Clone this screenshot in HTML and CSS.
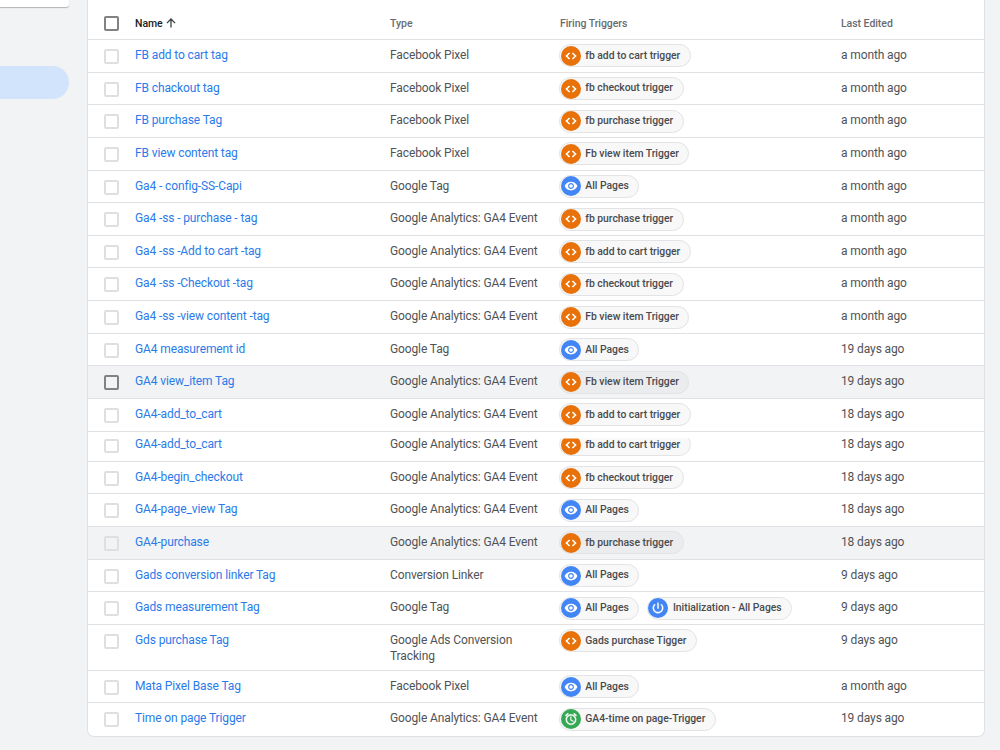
FILE: index.html
```html
<!DOCTYPE html>
<html lang="en">
<head>
    <meta charset="UTF-8">
    <meta name="viewport" content="width=device-width, initial-scale=1.0">
    <title>Tags</title>
    <link rel="stylesheet" href="styles.css">
</head>
<body>
    <!-- Icon sprites -->
    <svg class="sprites" aria-hidden="true">
        <symbol id="code" viewBox="0 0 24 24"><path d="M9.6 6.8 4.2 12l5.4 5.2M14.4 6.8l5.4 5.2-5.4 5.2" fill="none" stroke="#fff" stroke-width="2.7"/></symbol>
        <symbol id="eye" viewBox="0 0 24 24"><path fill="#fff" d="M12 4.5C7 4.5 2.73 7.61 1 12c1.73 4.39 6 7.5 11 7.5s9.27-3.11 11-7.5c-1.73-4.39-6-7.5-11-7.5zM12 17c-2.76 0-5-2.24-5-5s2.24-5 5-5 5 2.24 5 5-2.24 5-5 5zm0-8c-1.66 0-3 1.34-3 3s1.34 3 3 3 3-1.34 3-3-1.34-3-3-3z"/></symbol>
        <symbol id="power" viewBox="0 0 24 24"><path fill="#fff" d="M13 3h-2v10h2V3zm4.83 2.17-1.42 1.42C17.99 7.86 19 9.81 19 12c0 3.87-3.13 7-7 7s-7-3.13-7-7c0-2.19 1.01-4.14 2.58-5.42L6.17 5.17C4.23 6.82 3 9.26 3 12c0 4.97 4.03 9 9 9s9-4.03 9-9c0-2.74-1.23-5.18-3.17-6.83z" stroke="#fff" stroke-width=".6"/></symbol>
        <symbol id="alarm" viewBox="0 0 24 24"><path fill="#fff" d="m22 5.72-4.6-3.86-1.29 1.53 4.6 3.86L22 5.72zM7.88 3.39 6.6 1.86 2 5.71l1.29 1.53 4.59-3.85zM12.5 8H11v6l4.75 2.85.75-1.23-4-2.37V8zM12 4c-4.97 0-9 4.03-9 9s4.02 9 9 9a9 9 0 0 0 0-18zm0 16c-3.87 0-7-3.13-7-7s3.13-7 7-7 7 3.13 7 7-3.13 7-7 7z" stroke="#fff" stroke-width=".5"/></symbol>
    </svg>

    <div class="layout">
        <div class="sidebar">
            <div class="search-box"></div>
            <div class="nav-active"></div>
        </div>

        <div class="card">
            <div class="row head">
                <span class="check dark"></span>
                <div class="name">Name <svg class="arrow" viewBox="0 0 10 10"><path d="M5 9.6V1.2M.9 5.1 5 1l4.1 4.1"/></svg></div>
                <div>Type</div>
                <div>Firing Triggers</div>
                <div>Last Edited</div>
            </div>
            <div class="row">
                <span class="check"></span>
                <a class="name">FB add to cart tag</a>
                <div>Facebook Pixel</div>
                <div class="chips"><span class="chip"><i class="dot"><svg><use href="#code"/></svg></i>fb add to cart trigger</span></div>
                <div>a month ago</div>
            </div>
            <div class="row">
                <span class="check"></span>
                <a class="name">FB chackout tag</a>
                <div>Facebook Pixel</div>
                <div class="chips"><span class="chip"><i class="dot"><svg><use href="#code"/></svg></i>fb checkout trigger</span></div>
                <div>a month ago</div>
            </div>
            <div class="row">
                <span class="check"></span>
                <a class="name">FB purchase Tag</a>
                <div>Facebook Pixel</div>
                <div class="chips"><span class="chip"><i class="dot"><svg><use href="#code"/></svg></i>fb purchase trigger</span></div>
                <div>a month ago</div>
            </div>
            <div class="row">
                <span class="check"></span>
                <a class="name">FB view content tag</a>
                <div>Facebook Pixel</div>
                <div class="chips"><span class="chip"><i class="dot"><svg><use href="#code"/></svg></i>Fb view item Trigger</span></div>
                <div>a month ago</div>
            </div>
            <div class="row">
                <span class="check"></span>
                <a class="name">Ga4 - config-SS-Capi</a>
                <div>Google Tag</div>
                <div class="chips"><span class="chip"><i class="dot blue"><svg><use href="#eye"/></svg></i>All Pages</span></div>
                <div>a month ago</div>
            </div>
            <div class="row">
                <span class="check"></span>
                <a class="name">Ga4 -ss - purchase - tag</a>
                <div>Google Analytics: GA4 Event</div>
                <div class="chips"><span class="chip"><i class="dot"><svg><use href="#code"/></svg></i>fb purchase trigger</span></div>
                <div>a month ago</div>
            </div>
            <div class="row">
                <span class="check"></span>
                <a class="name">Ga4 -ss -Add to cart -tag</a>
                <div>Google Analytics: GA4 Event</div>
                <div class="chips"><span class="chip"><i class="dot"><svg><use href="#code"/></svg></i>fb add to cart trigger</span></div>
                <div>a month ago</div>
            </div>
            <div class="row">
                <span class="check"></span>
                <a class="name">Ga4 -ss -Checkout -tag</a>
                <div>Google Analytics: GA4 Event</div>
                <div class="chips"><span class="chip"><i class="dot"><svg><use href="#code"/></svg></i>fb checkout trigger</span></div>
                <div>a month ago</div>
            </div>
            <div class="row">
                <span class="check"></span>
                <a class="name">Ga4 -ss -view content -tag</a>
                <div>Google Analytics: GA4 Event</div>
                <div class="chips"><span class="chip"><i class="dot"><svg><use href="#code"/></svg></i>Fb view item Trigger</span></div>
                <div>a month ago</div>
            </div>
            <div class="row">
                <span class="check"></span>
                <a class="name">GA4 measurement id</a>
                <div>Google Tag</div>
                <div class="chips"><span class="chip"><i class="dot blue"><svg><use href="#eye"/></svg></i>All Pages</span></div>
                <div>19 days ago</div>
            </div>
            <div class="row hover">
                <span class="check dark"></span>
                <a class="name">GA4 view_item Tag</a>
                <div>Google Analytics: GA4 Event</div>
                <div class="chips"><span class="chip"><i class="dot"><svg><use href="#code"/></svg></i>Fb view item Trigger</span></div>
                <div>19 days ago</div>
            </div>
            <div class="row">
                <span class="check"></span>
                <a class="name">GA4-add_to_cart</a>
                <div>Google Analytics: GA4 Event</div>
                <div class="chips"><span class="chip"><i class="dot"><svg><use href="#code"/></svg></i>fb add to cart trigger</span></div>
                <div>18 days ago</div>
            </div>
            <div class="row short">
                <span class="check"></span>
                <a class="name">GA4-add_to_cart</a>
                <div>Google Analytics: GA4 Event</div>
                <div class="chips"><span class="chip"><i class="dot"><svg><use href="#code"/></svg></i>fb add to cart trigger</span></div>
                <div>18 days ago</div>
            </div>
            <div class="row">
                <span class="check"></span>
                <a class="name">GA4-begin_checkout</a>
                <div>Google Analytics: GA4 Event</div>
                <div class="chips"><span class="chip"><i class="dot"><svg><use href="#code"/></svg></i>fb checkout trigger</span></div>
                <div>18 days ago</div>
            </div>
            <div class="row">
                <span class="check"></span>
                <a class="name">GA4-page_view Tag</a>
                <div>Google Analytics: GA4 Event</div>
                <div class="chips"><span class="chip"><i class="dot blue"><svg><use href="#eye"/></svg></i>All Pages</span></div>
                <div>18 days ago</div>
            </div>
            <div class="row hover">
                <span class="check"></span>
                <a class="name">GA4-purchase</a>
                <div>Google Analytics: GA4 Event</div>
                <div class="chips"><span class="chip"><i class="dot"><svg><use href="#code"/></svg></i>fb purchase trigger</span></div>
                <div>18 days ago</div>
            </div>
            <div class="row">
                <span class="check"></span>
                <a class="name">Gads conversion linker Tag</a>
                <div>Conversion Linker</div>
                <div class="chips"><span class="chip"><i class="dot blue"><svg><use href="#eye"/></svg></i>All Pages</span></div>
                <div>9 days ago</div>
            </div>
            <div class="row">
                <span class="check"></span>
                <a class="name">Gads measurement Tag</a>
                <div>Google Tag</div>
                <div class="chips">
                    <span class="chip"><i class="dot blue"><svg><use href="#eye"/></svg></i>All Pages</span>
                    <span class="chip"><i class="dot blue"><svg><use href="#power"/></svg></i>Initialization - All Pages</span>
                </div>
                <div>9 days ago</div>
            </div>
            <div class="row tall">
                <span class="check"></span>
                <a class="name">Gds purchase Tag</a>
                <div>Google Ads Conversion Tracking</div>
                <div class="chips"><span class="chip"><i class="dot"><svg><use href="#code"/></svg></i>Gads purchase Tigger</span></div>
                <div>9 days ago</div>
            </div>
            <div class="row">
                <span class="check"></span>
                <a class="name">Mata Pixel Base Tag</a>
                <div>Facebook Pixel</div>
                <div class="chips"><span class="chip"><i class="dot blue"><svg><use href="#eye"/></svg></i>All Pages</span></div>
                <div>a month ago</div>
            </div>
            <div class="row">
                <span class="check"></span>
                <a class="name">Time on page Trigger</a>
                <div>Google Analytics: GA4 Event</div>
                <div class="chips"><span class="chip"><i class="dot green"><svg><use href="#alarm"/></svg></i>GA4-time on page-Trigger</span></div>
                <div>19 days ago</div>
            </div>
        </div>
    </div>
</body>
</html>
```
FILE: styles.css
```css
* {
    margin: 0;
    padding: 0;
    box-sizing: border-box;
}

body {
    font-family: Roboto, sans-serif;
    font-size: 12px;
    line-height: 16.33px;
    letter-spacing: -0.12px;
    color: #505356;
    background: #f1f3f4;
    height: 750px;
    overflow: hidden;
}

.sprites {
    display: none;
}

.layout {
    display: flex;
}

.sidebar {
    width: 87px;
}

.search-box {
    width: 69px;
    height: 7px;
    background: #fff;
    border-radius: 0 0 3px 0;
    box-shadow: 0 1px 1px rgba(60, 64, 67, 0.35);
}

.nav-active {
    width: 69px;
    height: 33px;
    margin-top: 59px;
    background: #d2e3fc;
    border-radius: 0 17px 17px 0;
}

.card {
    width: 898px;
    background: #fff;
    border: 1px solid #dfe1e5;
    border-top: none;
    border-radius: 0 0 7px 7px;
    overflow: hidden;
}

.row {
    display: grid;
    grid-template-columns: 32px 255px 170px 281px 1fr;
    height: 32.65px;
    padding: 7px 0 0 15px;
    border-bottom: 1px solid #dfe1e5;
}

.row:last-child {
    border-bottom: none;
}

.row.head {
    height: 40px;
    padding-top: 16px;
    font-size: 10.5px;
    font-weight: 500;
    letter-spacing: -0.05px;
    color: #686c70;
}

.head .name {
    color: #202124;
}

.arrow {
    width: 10px;
    height: 10px;
    margin-left: 1px;
    fill: none;
    stroke: #3c4043;
    stroke-width: 1.3;
    vertical-align: -1px;
}

.row.hover {
    background: #f1f3f4;
}

.row.short {
    height: 30.1px;
    padding-top: 4.4px;
}

.row.tall {
    height: 45.8px;
}

.tall div:nth-child(3) {
    width: 140px;
}

.check {
    width: 15px;
    height: 15px;
    margin-top: 2px;
    margin-left: 0.5px;
    border: 2px solid #dddfe1;
    border-radius: 2px;
}

.check.dark {
    border-color: #808284;
}

.head .check {
    margin-top: 0;
}

.short .check {
    height: 14px;
    margin-top: 3px;
}

a.name {
    color: #2a7be9;
}

.chips {
    display: flex;
    align-items: flex-start;
    gap: 7.6px;
    margin: -2.6px 0 0 -0.7px;
}

.chip {
    display: flex;
    align-items: center;
    height: 23px;
    padding: 0 9.6px 0 0.3px;
    font-size: 10.4px;
    font-weight: 500;
    letter-spacing: -0.03px;
    color: #484b4f;
    background: #f8f8f8;
    border: 1px solid #e2e3e5;
    border-radius: 12px;
    white-space: nowrap;
}

.hover .chip {
    background: #ebecee;
}

/* the repeated row is cut off along its top edge */
.short .chip {
    clip-path: inset(5px 0 0 0);
}

.dot {
    display: flex;
    align-items: center;
    justify-content: center;
    width: 20px;
    height: 20px;
    margin-right: 4.7px;
    background: #e8710a;
    border-radius: 50%;
}

.dot.blue {
    background: #4285f4;
}

.dot.green {
    background: #34a853;
}

.dot svg {
    width: 14px;
    height: 14px;
}
```
